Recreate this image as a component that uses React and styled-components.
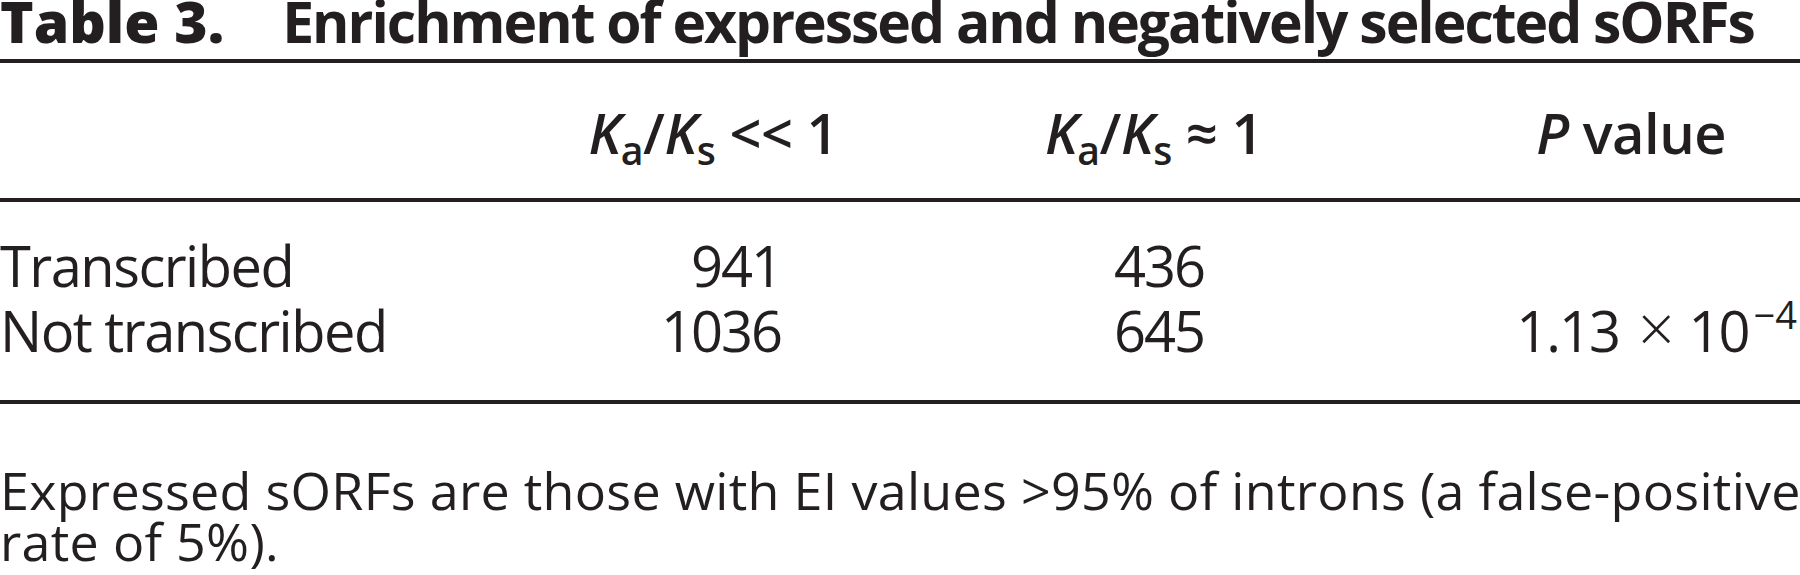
import React from "react";
import styled, { createGlobalStyle } from "styled-components";

const GlobalStyle = createGlobalStyle`
  html, body {
    margin: 0;
    padding: 0;
    background: #ffffff;
  }
  body {
    font-family: "Open Sans", "Noto Sans", sans-serif;
    color: #231f20;
  }
`;

const Page = styled.div`
  width: 1800px;
  height: 575px;
  overflow: hidden;
`;

const Caption = styled.h1`
  margin: 0 0 17px 0;
  height: 42px;
  font-size: 57px;
  line-height: 42px;
  font-weight: 700;
  white-space: nowrap;
`;

const CaptionLabel = styled.span`
  font-weight: 800;
`;

const CaptionTitle = styled.span`
  margin-left: 58px;
  letter-spacing: -2px;
`;

const Table = styled.div`
  border-top: 4px solid #231f20;
  border-bottom: 4px solid #231f20;
`;

const Row = styled.div`
  display: grid;
  grid-template-columns: 560px 320px 420px 500px;
  align-items: baseline;
`;

const HeadRow = styled(Row)`
  padding: 41px 0 38px;
  border-bottom: 4px solid #231f20;
`;

const Body = styled.div`
  padding: 31px 0 37px;
`;

const HeadCell = styled.div`
  font-size: 56px;
  line-height: 56px;
  font-weight: 600;
  letter-spacing: -0.5px;
  text-align: right;
  padding-right: ${(p) => p.$pad || 0}px;
  white-space: nowrap;
`;

const Cell = styled.div`
  font-size: 56px;
  line-height: 65px;
  font-weight: 400;
  letter-spacing: ${(p) => (p.$tight ? -2 : -1.5)}px;
  text-align: ${(p) => (p.$left ? "left" : "right")};
  padding-right: ${(p) => p.$pad || 0}px;
  white-space: nowrap;
`;

const Ital = styled.i`
  font-style: italic;
`;

const Sub = styled.sub`
  font-size: 0.7em;
  line-height: 0;
  vertical-align: -0.28em;
  font-weight: 600;
`;

const Times = styled.span`
  display: inline-block;
  font-size: 64px;
  font-weight: 300;
  line-height: 0;
  margin: 0 16px 0 19px;
`;

const Sup = styled.sup`
  font-size: 38px;
  line-height: 0;
  vertical-align: 23px;
  letter-spacing: 0;
  margin-left: 5px;
`;

const Note = styled.p`
  margin: 60px 0 0 0;
  font-size: 52px;
  line-height: 51px;
  letter-spacing: 0.3px;
  white-space: nowrap;
`;

const Ratio = ({ rel }) => (
  <>
    <Ital>K</Ital>
    <Sub>a</Sub>/<Ital>K</Ital>
    <Sub>s</Sub> {rel} 1
  </>
);

const rows = [
  { label: "Transcribed", a: "941", b: "436", p: null },
  { label: "Not transcribed", a: "1036", b: "645", p: "1.13" },
];

export default function App() {
  return (
    <Page>
      <GlobalStyle />
      <Caption>
        <CaptionLabel>Table 3.</CaptionLabel>
        <CaptionTitle>Enrichment of expressed and negatively selected sORFs</CaptionTitle>
      </Caption>

      <Table>
        <HeadRow>
          <HeadCell />
          <HeadCell $pad={42}>
            <Ratio rel="<<" />
          </HeadCell>
          <HeadCell $pad={37}>
            <Ratio rel="≈" />
          </HeadCell>
          <HeadCell $pad={74}>
            <Ital>P</Ital> value
          </HeadCell>
        </HeadRow>

        <Body>
          {rows.map((r) => (
            <Row key={r.label}>
              <Cell $left>{r.label}</Cell>
              <Cell $pad={99} $tight>{r.a}</Cell>
              <Cell $pad={96} $tight>{r.b}</Cell>
              <Cell $pad={3} $tight>
                {r.p && (
                  <>
                    {r.p}
                    <Times>×</Times>
                    10<Sup>−4</Sup>
                  </>
                )}
              </Cell>
            </Row>
          ))}
        </Body>
      </Table>

      <Note>
        Expressed sORFs are those with EI values &gt;95% of introns (a false-positive
        <br />
        rate of 5%).
      </Note>
    </Page>
  );
}
